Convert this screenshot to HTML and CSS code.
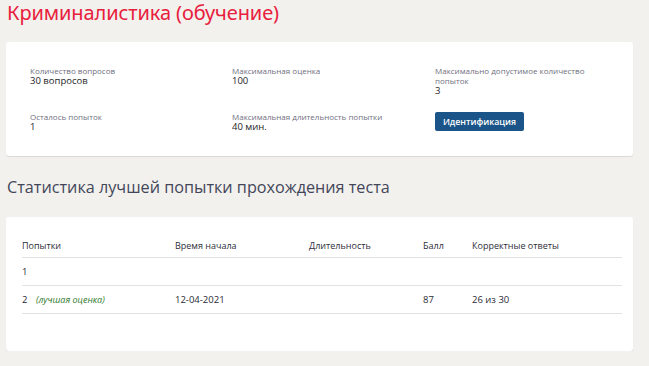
FILE: index.html
```html
<!DOCTYPE html>
<html lang="ru">
<head>
<meta charset="utf-8">
<link rel="stylesheet" href="styles.css">
</head>
<body>
<h1 class="title">Криминалистика (обучение)</h1>
<section class="card info">
  <div class="grid">
    <div class="item"><div class="label">Количество вопросов</div><div class="value">30 вопросов</div></div>
    <div class="item"><div class="label">Максимальная оценка</div><div class="value">100</div></div>
    <div class="item narrow"><div class="label">Максимально допустимое количество попыток</div><div class="value">3</div></div>
    <div class="item"><div class="label">Осталось попыток</div><div class="value">1</div></div>
    <div class="item"><div class="label">Максимальная длительность попытки</div><div class="value">40 мин.</div></div>
    <div class="item"><button class="btn">Идентификация</button></div>
  </div>
</section>
<h2 class="subtitle">Статистика лучшей попытки прохождения теста</h2>
<section class="card stats">
  <table class="table">
    <thead>
      <tr><th class="c1">Попытки</th><th class="c2">Время начала</th><th class="c3">Длительность</th><th class="c4">Балл</th><th>Корректные ответы</th></tr>
    </thead>
    <tbody>
      <tr><td>1</td><td></td><td></td><td></td><td></td></tr>
      <tr><td>2 <span class="best">(лучшая оценка)</span></td><td>12-04-2021</td><td></td><td>87</td><td>26 из 30</td></tr>
    </tbody>
  </table>
</section>
</body>
</html>
```
FILE: styles.css
```css
html, body { margin: 0; padding: 0; }
body {
  background: #f2f1ee;
  font-family: "Open Sans", "Noto Sans", sans-serif;
  color: #2a2a35;
  padding: 0 16px 0 6px;
  width: 627px;
}
.title {
  margin: 0;
  padding: 0 0 0 1px;
  height: 42px;
  box-sizing: border-box;
  font-family: "Noto Sans", "Open Sans", sans-serif;
  font-weight: 400;
  font-size: 20px;
  line-height: 26px;
  color: #e8203d;
  letter-spacing: -0.1px;
}
.card {
  background: #fff;
  border-radius: 3px;
  box-shadow: 0 1px 1px rgba(0,0,0,0.10);
}
.info {
  height: 114px;
  box-sizing: border-box;
  padding: 24px 0 0 24px;
}
.grid {
  display: grid;
  grid-template-columns: 202px 203px 190px;
  grid-template-rows: 46px 30px;
}
.label {
  font-size: 8px;
  line-height: 10px;
  color: #6f6f80;
}
.narrow .label { width: 150px; }
.value {
  font-size: 9.5px;
  line-height: 10px;
  color: #1e1e28;
  font-weight: 500;
}
.btn {
  display: block;
  margin-top: 0;
  width: 89px;
  height: 19px;
  border: 0;
  border-radius: 2px;
  background: #1a5488;
  color: #fff;
  font-family: "Open Sans", sans-serif;
  font-weight: 600;
  font-size: 8.8px;
  padding: 0;
}
.subtitle {
  margin: 0;
  padding: 21px 0 0 1px;
  height: 40px;
  box-sizing: border-box;
  font-weight: 400;
  font-size: 16.2px;
  line-height: 20px;
  color: #434659;
}
.stats {
  margin-top: 21px;
  height: 134px;
  box-sizing: border-box;
  padding: 17px 11px 0 16px;
}
.table {
  width: 100%;
  border-collapse: collapse;
  font-size: 9.5px;
}
.table th {
  text-align: left;
  font-weight: 500;
  font-size: 9px;
  color: #2e2e38;
  height: 23px;
  padding: 0;
  vertical-align: middle;
  border-bottom: 1px solid #e2e2e2;
}
.table td {
  height: 27px;
  padding: 0;
  color: #2a2a35;
  border-bottom: 1px solid #e2e2e2;
}
.c1 { width: 153px; }
.c2 { width: 134px; }
.c3 { width: 114px; }
.c4 { width: 49px; }
.best {
  margin-left: 6px;
  font-style: italic;
  color: #2f7a2c;
  font-size: 9px;
}
```
